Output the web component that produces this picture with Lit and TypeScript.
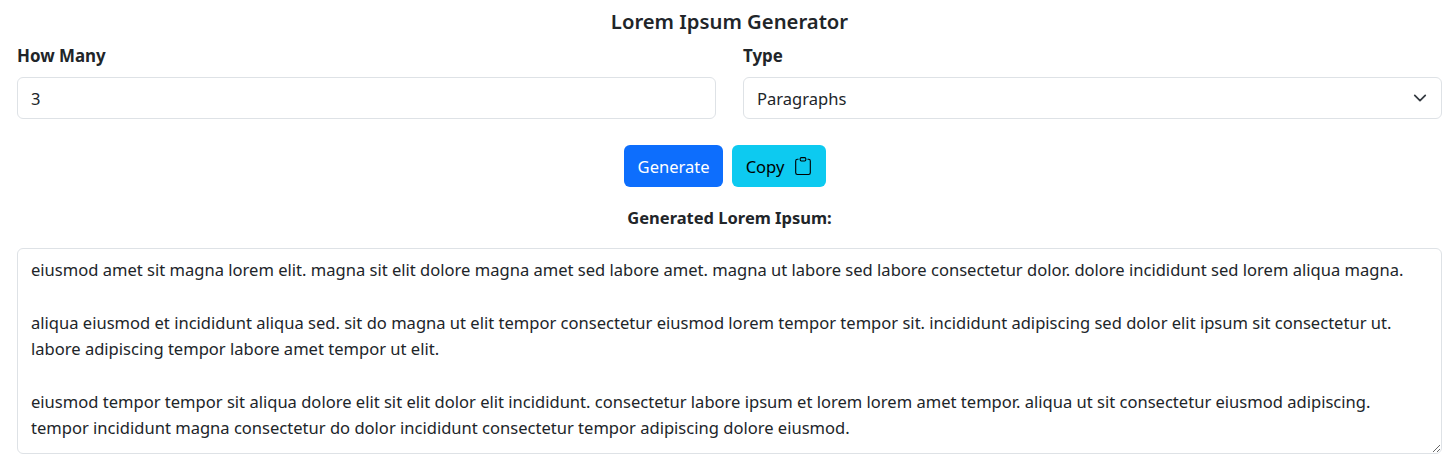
import { LitElement, html, css } from "lit";
import { customElement } from "lit/decorators.js";

const TEXT = `eiusmod amet sit magna lorem elit. magna sit elit dolore magna amet sed labore amet. magna ut labore sed labore consectetur dolor. dolore incididunt sed lorem aliqua magna.

aliqua eiusmod et incididunt aliqua sed. sit do magna ut elit tempor consectetur eiusmod lorem tempor tempor sit. incididunt adipiscing sed dolor elit ipsum sit consectetur ut. labore adipiscing tempor labore amet tempor ut elit.

eiusmod tempor tempor sit aliqua dolore elit sit elit dolor elit incididunt. consectetur labore ipsum et lorem lorem amet tempor. aliqua ut sit consectetur eiusmod adipiscing. tempor incididunt magna consectetur do dolor incididunt consectetur tempor adipiscing dolore eiusmod.`;

@customElement("app-root")
export class AppRoot extends LitElement {
  static styles = css`
    :host {
      display: block;
      box-sizing: border-box;
      height: 463px;
      overflow: hidden;
      padding: 0 11px 0 17px;
      background: #fff;
      color: #212529;
      font-family: "Noto Sans", "Open Sans", sans-serif;
      font-size: 16.56px;
      line-height: 26px;
    }
    * { box-sizing: border-box; }
    h1 {
      margin: 0;
      padding-top: 7px;
      height: 44px;
      font-size: 20.25px;
      line-height: 28px;
      font-weight: 600;
      text-align: center;
    }
    .row {
      display: grid;
      grid-template-columns: 1fr 1fr;
      gap: 27px;
    }
    .field label {
      display: block;
      height: 33px;
      line-height: 24px;
      font-size: 16.9px;
      font-weight: 700;
    }
    .control, .area {
      display: block;
      width: 100%;
      border: 1px solid #dee2e6;
      border-radius: 6px;
      background: #fff;
      color: #212529;
      font: inherit;
      outline: none;
      margin: 0;
    }
    .control {
      height: 42px;
      padding: 7px 13px;
      appearance: none;
    }
    select.control { padding-top: 8px; padding-bottom: 6px; }
    .selectwrap { position: relative; }
    .chev {
      position: absolute;
      right: 15px;
      top: 14px;
      width: 14px;
      height: 14px;
      pointer-events: none;
    }
    .actions {
      display: flex;
      justify-content: center;
      gap: 9px;
      margin-top: 26px;
      padding-right: 9px;
    }
    .btn {
      height: 42px;
      padding: 1px 14px 0;
      border: none;
      border-radius: 6px;
      font: inherit;
      display: inline-flex;
      align-items: center;
      gap: 10px;
    }
    .primary { background: #0d6efd; color: #fff; padding-right: 13px; }
    .info { background: #0dcaf0; color: #000; padding-right: 14px; }
    .btn svg { width: 18px; height: 18px; margin-top: -1px; }
    h2 {
      margin: 19px 0 0;
      height: 42px;
      font-size: 16.5px;
      line-height: 24px;
      font-weight: 700;
      text-align: center;
    }
    .area {
      height: 206px;
      padding: 8px 13px;
      line-height: 26.35px;
      resize: vertical;
    }
  `;

  render() {
    return html`
      <h1>Lorem Ipsum Generator</h1>
      <div class="row">
        <div class="field">
          <label>How Many</label>
          <input class="control" type="number" .value=${"3"} />
        </div>
        <div class="field">
          <label>Type</label>
          <div class="selectwrap">
            <select class="control">
              <option>Paragraphs</option>
              <option>Sentences</option>
              <option>Words</option>
            </select>
            <svg class="chev" viewBox="0 0 16 16" fill="none" stroke="#343a40" stroke-width="2" stroke-linecap="round" stroke-linejoin="round"><path d="m2 5 6 6 6-6"/></svg>
          </div>
        </div>
      </div>
      <div class="actions">
        <button class="btn primary">Generate</button>
        <button class="btn info">Copy
          <svg viewBox="0 0 16 16" fill="currentColor"><path d="M4 1.5H3a2 2 0 0 0-2 2V14a2 2 0 0 0 2 2h10a2 2 0 0 0 2-2V3.5a2 2 0 0 0-2-2h-1v1h1a1 1 0 0 1 1 1V14a1 1 0 0 1-1 1H3a1 1 0 0 1-1-1V3.5a1 1 0 0 1 1-1h1z"/><path d="M9.5 1a.5.5 0 0 1 .5.5v1a.5.5 0 0 1-.5.5h-3a.5.5 0 0 1-.5-.5v-1a.5.5 0 0 1 .5-.5zm-3-1A1.5 1.5 0 0 0 5 1.5v1A1.5 1.5 0 0 0 6.500 4h3A1.500 1.500 0 0 0 11 2.500v-1A1.500 1.500 0 0 0 9.500 0z"/></svg>
        </button>
      </div>
      <h2>Generated Lorem Ipsum:</h2>
      <textarea class="area" .value=${TEXT}></textarea>
    `;
  }
}
